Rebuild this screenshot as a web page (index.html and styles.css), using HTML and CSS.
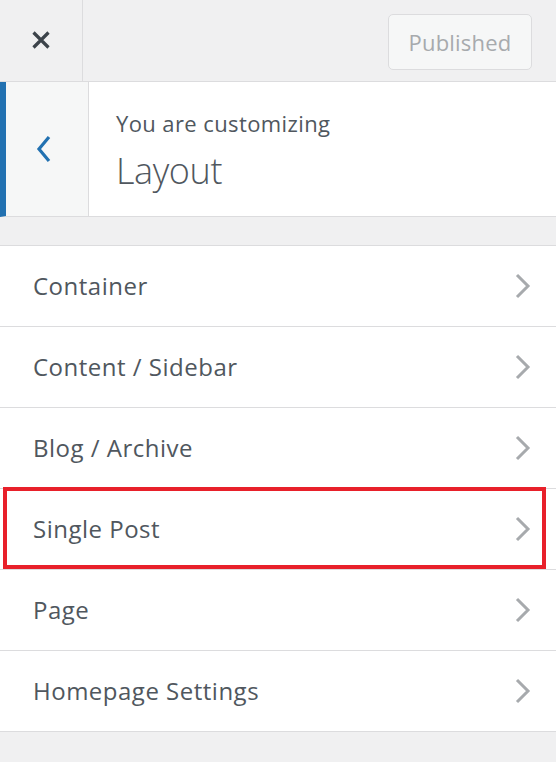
FILE: index.html
```html
<!DOCTYPE html>
<html lang="en">
<head>
<meta charset="utf-8">
<title>Customizer - Layout</title>
<link rel="stylesheet" href="styles.css">
</head>
<body>
<div class="panel">
  <header class="topbar">
    <button class="close" aria-label="Close">
      <svg width="20" height="20" viewBox="0 0 20 20"><path d="M2.5 2.5 L17.5 17.5 M17.5 2.5 L2.5 17.5" stroke="#3c434a" stroke-width="3.2" fill="none"/></svg>
    </button>
    <div class="topbar-actions">
      <button class="published">Published</button>
    </div>
  </header>
  <section class="section-head">
    <button class="back" aria-label="Back">
      <svg width="16" height="28" viewBox="0 0 16 28"><path d="M13 2 L3 14 L13 26" stroke="#2271b1" stroke-width="3.2" fill="none"/></svg>
    </button>
    <div class="titles">
      <span class="sub">You are customizing</span>
      <h1 class="title">Layout</h1>
    </div>
  </section>
  <div class="spacer"></div>
  <ul class="menu">
    <li class="item"><span>Container</span><svg class="chev" width="16" height="26" viewBox="0 0 16 26"><path d="M2 2 L13 13 L2 24" stroke="#a7aaad" stroke-width="3" fill="none"/></svg></li>
    <li class="item"><span>Content / Sidebar</span><svg class="chev" width="16" height="26" viewBox="0 0 16 26"><path d="M2 2 L13 13 L2 24" stroke="#a7aaad" stroke-width="3" fill="none"/></svg></li>
    <li class="item"><span>Blog / Archive</span><svg class="chev" width="16" height="26" viewBox="0 0 16 26"><path d="M2 2 L13 13 L2 24" stroke="#a7aaad" stroke-width="3" fill="none"/></svg></li>
    <li class="item highlighted"><span>Single Post</span><svg class="chev" width="16" height="26" viewBox="0 0 16 26"><path d="M2 2 L13 13 L2 24" stroke="#a7aaad" stroke-width="3" fill="none"/></svg></li>
    <li class="item"><span>Page</span><svg class="chev" width="16" height="26" viewBox="0 0 16 26"><path d="M2 2 L13 13 L2 24" stroke="#a7aaad" stroke-width="3" fill="none"/></svg></li>
    <li class="item"><span>Homepage Settings</span><svg class="chev" width="16" height="26" viewBox="0 0 16 26"><path d="M2 2 L13 13 L2 24" stroke="#a7aaad" stroke-width="3" fill="none"/></svg></li>
  </ul>
</div>
</body>
</html>
```

FILE: styles.css
```css
html, body {
  margin: 0;
  padding: 0;
  background: #f0f0f1;
  font-family: "Open Sans", "Noto Sans", sans-serif;
  color: #50575e;
}
.panel {
  width: 556px;
  height: 762px;
  background: #f0f0f1;
}
.topbar {
  display: flex;
  height: 81px;
  border-bottom: 1px solid #dcdcde;
  background: #f0f0f1;
}
.close {
  width: 83px;
  height: 81px;
  border: 0;
  border-right: 1px solid #dcdcde;
  background: transparent;
  display: flex;
  align-items: center;
  justify-content: center;
  padding: 0 0 2px 0;
  margin: 0;
}
.topbar-actions {
  flex: 1;
  display: flex;
  justify-content: flex-end;
  align-items: flex-start;
  padding: 14px 24px 0 0;
}
.published {
  width: 144px;
  height: 56px;
  border: 1px solid #dcdcde;
  border-radius: 5px;
  background: #f6f7f7;
  color: #a7aaad;
  font-family: inherit;
  font-size: 22px;
  letter-spacing: 0.2px;
  padding: 0;
}
.section-head {
  display: flex;
  height: 134px;
  background: #fff;
  border-left: 6px solid #2271b1;
  border-bottom: 1px solid #dcdcde;
}
.back {
  width: 83px;
  border: 0;
  border-right: 1px solid #dcdcde;
  background: #f6f7f7;
  display: flex;
  align-items: center;
  justify-content: center;
  padding: 0 6px 0 0;
  margin: 0;
}
.titles {
  display: flex;
  flex-direction: column;
  padding: 24px 0 0 27px;
}
.sub {
  font-size: 22px;
  letter-spacing: 0.4px;
  line-height: 34px;
  color: #50575e;
}
.title {
  margin: 4px 0 0 0;
  font-size: 36px;
  font-weight: 300;
  letter-spacing: -0.4px;
  line-height: 54px;
  color: #50575e;
}
.spacer {
  height: 28px;
  border-bottom: 1px solid #dcdcde;
}
.menu {
  list-style: none;
  margin: 0;
  padding: 0;
}
.item {
  position: relative;
  display: flex;
  align-items: center;
  justify-content: space-between;
  height: 80px;
  background: #fff;
  border-bottom: 1px solid #dcdcde;
  padding: 0 25px 0 33px;
  font-size: 24px;
  letter-spacing: 0.5px;
  color: #50575e;
}
.item span {
  padding-bottom: 2px;
}
.highlighted::after {
  content: "";
  position: absolute;
  left: 3px;
  top: -2px;
  width: 535px;
  height: 74px;
  border: 4px solid #e8202a;
}
```
